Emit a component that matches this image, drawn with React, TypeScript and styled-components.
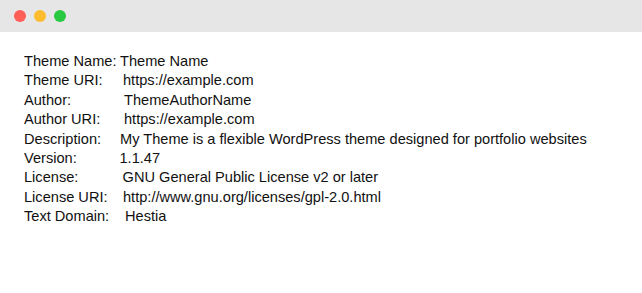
import styled, { createGlobalStyle } from 'styled-components'

const GlobalStyle = createGlobalStyle`
  html, body {
    margin: 0;
    padding: 0;
    background: #ffffff;
  }
`

const Window = styled.div`
  width: 642px;
  height: 293px;
  background: #ffffff;
  display: flex;
  flex-direction: column;
  overflow: hidden;
`

const TitleBar = styled.div`
  height: 32px;
  flex-shrink: 0;
  display: flex;
  align-items: center;
  gap: 8px;
  padding-left: 14px;
  background: #e6e6e6;
`

const Dot = styled.span<{ $color: string }>`
  width: 12px;
  height: 12px;
  border-radius: 50%;
  background: ${(p) => p.$color};
`

const Header = styled.div`
  padding: 20px 24px;
  font-family: 'Liberation Sans', Arial, sans-serif;
  font-size: 14.6px;
  line-height: 19.4px;
  color: #111111;
`

const Row = styled.div`
  display: flex;
  white-space: nowrap;
`

const Key = styled.span<{ $width: number }>`
  flex: 0 0 ${(p) => p.$width}px;
`

const Value = styled.span``

const fields: [string, string, number][] = [
  ['Theme Name:', 'Theme Name', 96],
  ['Theme URI:', 'https://example.com', 99],
  ['Author:', 'ThemeAuthorName', 100],
  ['Author URI:', 'https://example.com', 100],
  ['Description:', 'My Theme is a flexible WordPress theme designed for portfolio websites', 96],
  ['Version:', '1.1.47', 95.5],
  ['License:', 'GNU General Public License v2 or later', 98.6],
  ['License URI:', 'http://www.gnu.org/licenses/gpl-2.0.html', 99],
  ['Text Domain:', 'Hestia', 101],
]

const App = () => {
  return (
    <>
      <GlobalStyle />
      <Window>
        <TitleBar>
          <Dot $color="#ff5f57" />
          <Dot $color="#febc2e" />
          <Dot $color="#28c840" />
        </TitleBar>
        <Header>
          {fields.map(([key, value, width]) => (
            <Row key={key}>
              <Key $width={width}>{key}</Key>
              <Value>{value}</Value>
            </Row>
          ))}
        </Header>
      </Window>
    </>
  )
}

export default App
